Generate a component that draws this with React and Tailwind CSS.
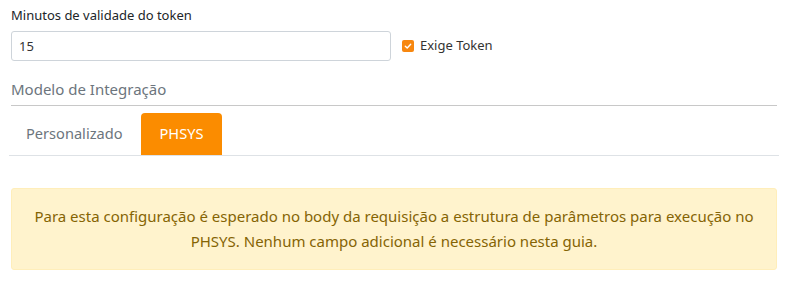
import React, { useState } from 'react';

const App = () => {
  const [minutes, setMinutes] = useState('15');
  const [requireToken, setRequireToken] = useState(true);
  const [tab, setTab] = useState('phsys');

  return (
    <div className="w-[790px] h-[285px] bg-white px-[11px] pt-[6px] text-[13px] text-[#212529]" style={{ fontFamily: '"Noto Sans", "Open Sans", sans-serif' }}>
      <label className="block leading-[18px] mb-[7px]">Minutos de validade do token</label>
      <div className="flex items-center">
        <input
          value={minutes}
          onChange={(e) => setMinutes(e.target.value)}
          className="w-[380px] h-[30px] px-[7px] border border-[#ced4da] rounded-[3px] text-[13px] text-[#333] outline-none"
        />
        <label className="flex items-center ml-[11px] cursor-pointer select-none">
          <span
            onClick={() => setRequireToken(!requireToken)}
            className={`w-[12px] h-[12px] rounded-[2px] flex items-center justify-center ${requireToken ? 'bg-[#f7870f]' : 'border border-[#adb5bd] bg-white'}`}
          >
            {requireToken && (
              <svg width="8" height="8" viewBox="0 0 8 8">
                <path d="M1.3 4.2 L3.2 6 L6.7 2.2" fill="none" stroke="#fff" strokeWidth="1.4" strokeLinecap="round" strokeLinejoin="round" />
              </svg>
            )}
          </span>
          <span className="ml-[6px] text-[13px] text-[#333]">Exige Token</span>
        </label>
      </div>

      <div className="mt-[17px] border-b border-[#c8c8c8] pb-[5px] text-[15px] leading-[22px] text-[#6c757d] w-[766px]">
        Modelo de Integração
      </div>

      <div className="flex mt-[7px] border-b border-[#dee2e6] w-[770px] -ml-[2px]">
        <button
          onClick={() => setTab('custom')}
          className={`h-[42px] px-[17px] text-[14.6px] rounded-t-[4px] ${tab === 'custom' ? 'bg-[#fb8c00] text-white' : 'text-[#6c757d]'}`}
        >
          Personalizado
        </button>
        <button
          onClick={() => setTab('phsys')}
          className={`ml-[1px] h-[42px] px-[19px] text-[14.6px] rounded-t-[4px] ${tab === 'phsys' ? 'bg-[#fb8c00] text-white' : 'text-[#6c757d]'}`}
        >
          PHSYS
        </button>
      </div>

      <div className="mt-[32px] w-[766px] bg-[#fff3cd] border border-[#ffeeba] rounded-[3px] px-[16px] py-[15px] text-center text-[15px] leading-[25px] text-[#856404]">
        {tab === 'phsys'
          ? 'Para esta configuração é esperado no body da requisição a estrutura de parâmetros para execução no PHSYS. Nenhum campo adicional é necessário nesta guia.'
          : 'Configure os campos personalizados da integração.'}
      </div>
    </div>
  );
};

export default App;
